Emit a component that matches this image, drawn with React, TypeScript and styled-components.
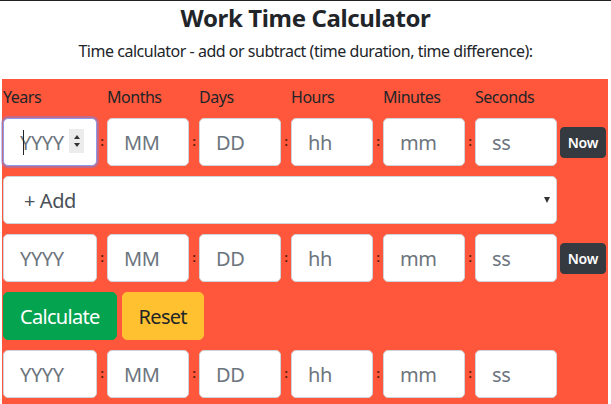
import React from 'react';
import styled, { createGlobalStyle } from 'styled-components';

const GlobalStyle = createGlobalStyle`
    html, body {
        margin: 0;
        padding: 0;
        background: #ffffff;
    }
    body {
        font-family: "Noto Sans", "Open Sans", sans-serif;
        color: #212529;
        letter-spacing: -0.03em;
    }
`

type Column = {
    label: string,
    placeholder: string,
    width: number,
}

const columns: Column[] = [
    { label: 'Years', placeholder: 'YYYY', width: 94 },
    { label: 'Months', placeholder: 'MM', width: 82 },
    { label: 'Days', placeholder: 'DD', width: 82 },
    { label: 'Hours', placeholder: 'hh', width: 82 },
    { label: 'Minutes', placeholder: 'mm', width: 82 },
    { label: 'Seconds', placeholder: 'ss', width: 82 },
]

type RowProps = {
    focusFirst?: boolean,
    withNow?: boolean,
}

const TimeRow: React.FC<RowProps> = ({ focusFirst, withNow }) => {
    return (
        <Row>
            {columns.map((c, i) => (
                <React.Fragment key={c.label}>
                    {i == 0 && focusFirst
                        ? <FocusWrap $w={c.width}>
                            <Input $w={c.width} $focused placeholder={c.placeholder} readOnly />
                            <Caret />
                            <Spinner>
                                <SpinArrow $up />
                                <SpinArrow />
                            </Spinner>
                        </FocusWrap>
                        : <Input $w={c.width} placeholder={c.placeholder} readOnly />
                    }
                    {i < columns.length - 1 && <Colon>:</Colon>}
                </React.Fragment>
            ))}
            {withNow && <NowButton>Now</NowButton>}
        </Row>
    )
}

const App: React.FC = () => {
    return (
        <Page>
            <GlobalStyle />
            <Title>Work Time Calculator</Title>
            <Subtitle>Time calculator - add or subtract (time duration, time difference):</Subtitle>
            <Panel>
                <LabelRow>
                    {columns.map((c, i) => (
                        <Label key={c.label} $w={i < columns.length - 1 ? c.width + 10 : c.width}>{c.label}</Label>
                    ))}
                </LabelRow>
                <Stack>
                    <TimeRow focusFirst withNow />
                    <SelectWrap>
                        <Select defaultValue="add">
                            <option value="add">+ Add</option>
                            <option value="sub">- Subtract</option>
                        </Select>
                    </SelectWrap>
                    <TimeRow withNow />
                    <Buttons>
                        <ActionButton $variant="success">Calculate</ActionButton>
                        <ActionButton $variant="warning">Reset</ActionButton>
                    </Buttons>
                    <TimeRow />
                </Stack>
            </Panel>
        </Page>
    )
}

export default App;

const Page = styled.div`
    border-top: 1px solid #222222;
    width: 611px;
    height: 403px;
    overflow: hidden;
`

const Title = styled.h1`
    margin: 2px 0 0;
    font-size: 24px;
    line-height: 29px;
    font-weight: 700;
    letter-spacing: -0.015em;
    text-align: center;
    color: #212529;
`

const Subtitle = styled.p`
    margin: 7px 0 0;
    font-size: 16px;
    line-height: 24px;
    text-align: center;
    color: #212529;
`

const Panel = styled.div`
    margin: 16px 3px 0 2px;
    padding: 6px 0 10px 1px;
    background-color: #ff573b;
`

const LabelRow = styled.div`
    display: flex;
    margin-bottom: 9px;
`

const Label = styled.div<{ $w: number }>`
    width: ${p => p.$w}px;
    font-size: 16px;
    line-height: 24px;
    color: #212529;
`

const Stack = styled.div`
    display: flex;
    flex-direction: column;
    gap: 10px;
`

const Row = styled.div`
    display: flex;
    align-items: center;
    height: 48px;
`

const Input = styled.input<{ $w: number, $focused?: boolean }>`
    box-sizing: border-box;
    width: ${p => p.$w}px;
    height: 48px;
    padding: 0 16px;
    font-family: inherit;
    font-size: 20px;
    letter-spacing: -0.02em;
    color: #495057;
    background: #ffffff;
    border: 1px solid ${p => p.$focused ? '#8c9be8' : '#ced4da'};
    border-radius: 5px;
    outline: none;
    box-shadow: ${p => p.$focused ? '0 0 0 2px rgba(120, 130, 230, .45)' : 'none'};

    &::placeholder {
        color: #6c757d;
    }
`

const FocusWrap = styled.div<{ $w: number }>`
    position: relative;
    width: ${p => p.$w}px;
    height: 48px;
`

const Caret = styled.span`
    position: absolute;
    left: 20px;
    top: 12px;
    width: 1px;
    height: 25px;
    background: #212529;
`

const Spinner = styled.div`
    position: absolute;
    left: 66px;
    top: 11px;
    width: 15px;
    height: 24px;
    background: #ececec;
    display: flex;
    flex-direction: column;
    align-items: center;
    justify-content: center;
    gap: 4px;
`

const SpinArrow = styled.span<{ $up?: boolean }>`
    width: 0;
    height: 0;
    border-left: 3.5px solid transparent;
    border-right: 3.5px solid transparent;
    ${p => p.$up ? 'border-bottom: 4px solid #333;' : 'border-top: 4px solid #333;'}
`

const Colon = styled.span`
    width: 10px;
    text-align: center;
    font-size: 12px;
    font-weight: 700;
    line-height: 12px;
    color: #5a1b10;
`

const NowButton = styled.button`
    margin-left: 3px;
    height: 31px;
    width: 46px;
    padding: 0;
    font-family: inherit;
    font-size: 14px;
    font-weight: 600;
    letter-spacing: -0.01em;
    color: #ffffff;
    background-color: #343a40;
    border: 1px solid #343a40;
    border-radius: 4px;
`

const SelectWrap = styled.div`
    position: relative;
    width: 554px;
    height: 48px;

    &::after {
        content: '';
        position: absolute;
        right: 7px;
        top: 21px;
        border-left: 3.5px solid transparent;
        border-right: 3.5px solid transparent;
        border-top: 6px solid #333;
    }
`

const Select = styled.select`
    appearance: none;
    -webkit-appearance: none;
    box-sizing: border-box;
    width: 100%;
    height: 48px;
    padding: 0 20px;
    font-family: inherit;
    font-size: 20px;
    letter-spacing: -0.02em;
    color: #495057;
    background: #ffffff;
    border: 1px solid #ced4da;
    border-radius: 5px;
    outline: none;
`

const Buttons = styled.div`
    display: flex;
    gap: 5px;
    height: 48px;
`

const ActionButton = styled.button<{ $variant: 'success' | 'warning' }>`
    height: 48px;
    padding: 0 16px;
    font-family: inherit;
    font-size: 20px;
    letter-spacing: -0.035em;
    border-radius: 5px;
    border: 1px solid ${p => p.$variant == 'success' ? '#03a34f' : '#ffc12f'};
    background-color: ${p => p.$variant == 'success' ? '#03a34f' : '#ffc12f'};
    color: ${p => p.$variant == 'success' ? '#ffffff' : '#212529'};
`
